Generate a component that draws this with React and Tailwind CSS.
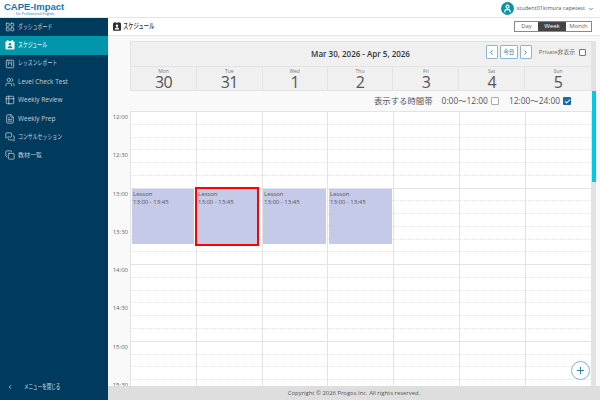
import React from 'react';
import { ChevronDown, ChevronLeft, ChevronRight, Plus, Check, User, LayoutGrid, SquareKanban, Users, Table2, FileText, MessagesSquare, Copy } from 'lucide-react';

// calendar page with a person on it, lucide has no close match
const ScheduleIcon = () => (
    <svg width="10" height="10" viewBox="0 0 10 10" className="shrink-0">
        <rect x="0.5" y="1.2" width="9" height="8.3" rx="1" fill="#fff" />
        <rect x="2.2" y="0" width="1.2" height="2.4" fill="#fff" />
        <rect x="6.6" y="0" width="1.2" height="2.4" fill="#fff" />
        <circle cx="5" cy="4.3" r="1.3" fill="#0097ab" />
        <path d="M2.6 8.3c0-1.6 1-2.3 2.4-2.3s2.4 .7 2.4 2.3z" fill="#0097ab" />
    </svg>
);

const TitleIcon = () => (
    <svg width="8" height="9" viewBox="0 0 8 9" className="shrink-0">
        <rect x="0" y="0.8" width="8" height="8" rx="1" fill="#2f2f2f" />
        <rect x="1.6" y="0" width="1" height="2" fill="#2f2f2f" />
        <rect x="5.4" y="0" width="1" height="2" fill="#2f2f2f" />
        <circle cx="4" cy="3.8" r="1.2" fill="#fff" />
        <path d="M1.9 7.4c0-1.4 .9-2 2.1-2s2.1 .6 2.1 2z" fill="#fff" />
    </svg>
);

// the original font has condensed kana, so squeeze them
const Kana = ({ children, className = '' }) => (
    <span className={`inline-block origin-left scale-x-[0.7] whitespace-nowrap ${className}`}>{children}</span>
);

const menuItems = [
    { label: 'ダッシュボード', icon: LayoutGrid, kana: true },
    { label: 'スケジュール', icon: ScheduleIcon, kana: true, active: true },
    { label: 'レッスンレポート', icon: SquareKanban, kana: true },
    { label: 'Level Check Test', icon: Users },
    { label: 'Weekly Review', icon: Table2 },
    { label: 'Weekly Prep', icon: FileText },
    { label: 'コンサルセッション', icon: MessagesSquare, kana: true },
    { label: '教材一覧', icon: Copy },
];

const days = [
    { name: 'Mon', date: '30', width: 'w-[66px]', lesson: 'left-[1px] right-[2px]' },
    { name: 'Tue', date: '31', width: 'w-[66px]', lesson: 'left-0 right-[5px] outline-2 outline-[#f00]' },
    { name: 'Wed', date: '1', width: 'w-[65px]', lesson: 'left-0 right-[1px]' },
    { name: 'Thu', date: '2', width: 'w-[66px]', lesson: 'left-[1px] right-[1px]' },
    { name: 'Fri', date: '3', width: 'w-[66px]' },
    { name: 'Sat', date: '4', width: 'w-[66px]' },
    { name: 'Sun', date: '5', width: 'w-[66px]' },
];

const times = ['12:00', '12:30', '13:00', '13:30', '14:00', '14:30', '15:00', '15:30'];
const slots = Array.from({ length: 24 }, (_, i) => i);

const Sidebar = () => (
    <aside className="w-[108px] shrink-0 bg-[#003a5c] flex flex-col justify-between text-[#c4d3dc]">
        <nav>
            {menuItems.map((item) => (
                <div key={item.label} className={`h-[18.3px] pl-[5px] flex items-center gap-[3px] text-[6.5px] ${item.active ? 'bg-[#0097ab] text-white' : ''}`}>
                    <item.icon size={10} strokeWidth={1.8} className="shrink-0" />
                    {item.kana ? <Kana className="text-[7px]">{item.label}</Kana> : <span className={item.label === '教材一覧' ? 'text-[6px]' : ''}>{item.label}</span>}
                </div>
            ))}
        </nav>
        <div className="h-[26px] pl-[7px] flex items-center gap-[11px] text-[#d5e0e6]">
            <ChevronLeft size={6} strokeWidth={3} className="shrink-0" />
            <Kana className="text-[6.5px]">メニューを閉じる</Kana>
        </div>
    </aside>
);

const CalendarHeader = () => (
    <div className="h-[50px] ml-[22px] bg-[#f0f0f0] border border-[#e3e3e3] flex flex-col">
        <div className="h-[26px] relative flex items-center justify-center border-b border-[#e3e3e3]">
            <span className="text-[8px] font-semibold text-[#333] mr-[1px]">Mar 30, 2026 - Apr 5, 2026</span>
            <div className="absolute right-[5px] top-[3px] flex items-center gap-[2px] text-[#2a6f9e]">
                <button className="w-[12px] h-[14px] bg-white border border-[#8fb6d0] rounded-[1px] flex items-center justify-center"><ChevronLeft size={7} strokeWidth={3} /></button>
                <button className="w-[18px] h-[14px] bg-white border border-[#8fb6d0] rounded-[1px] text-[5.5px] flex items-center justify-center">今日</button>
                <button className="w-[12px] h-[14px] bg-white border border-[#8fb6d0] rounded-[1px] flex items-center justify-center"><ChevronRight size={7} strokeWidth={3} /></button>
                <span className="ml-[5px] text-[5.8px] text-[#666]">Private非表示</span>
                <span className="ml-[2px] w-[7px] h-[7px] bg-white border border-[#777] rounded-[1px]" />
            </div>
        </div>
        <div className="flex-1 flex">
            {days.map((d) => (
                <div key={d.name} className={`${d.width} border-r border-[#e3e3e3] flex flex-col items-center text-[#555] last:border-r-0`}>
                    <span className="text-[5px] leading-[7px] mt-[1px] text-[#777]">{d.name}</span>
                    <span className="text-[16px] leading-[15px] tracking-[-0.7px]">{d.date}</span>
                </div>
            ))}
        </div>
    </div>
);

const TimeGrid = () => (
    <div className="flex-1 min-h-0 flex overflow-hidden">
        <div className="w-[22px] shrink-0">
            {times.map((t) => (
                <div key={t} className="h-[38.3px] pr-[2px] text-right text-[6px] leading-[12px] text-[#666]">{t}</div>
            ))}
        </div>
        <div className="flex items-start bg-white border-t border-l border-[#e3e3e3]">
            {days.map((d) => (
                <div key={d.name} className={`${d.width} relative border-r border-[#e3e3e3]`}>
                    {slots.map((s) => (
                        <div key={s} className={`h-[12.77px] border-b ${s % 6 === 5 ? 'border-solid border-[#e3e3e3]' : 'border-dotted border-[#e4e4e4]'}`} />
                    ))}
                    {d.lesson && (
                        <div className={`absolute top-[77px] h-[55px] bg-[#c5cae9] px-[1px] pt-[1px] text-[6px] leading-[8px] text-[#555] ${d.lesson}`}>
                            <div>Lesson</div>
                            <div>13:00 - 13:45</div>
                        </div>
                    )}
                </div>
            ))}
        </div>
    </div>
);

const App = () => {
    return (
        <div className="w-[600px] h-[400px] flex flex-col overflow-hidden relative bg-[#f9f9f9] font-['Open_Sans','Noto_Sans_CJK_JP',sans-serif]">
            {/* Header */}
            <header className="h-[18px] shrink-0 bg-white border-b border-[#e5e5e5] flex items-center justify-between pl-[4px] pr-[6px]">
                <div className="flex flex-col items-start">
                    <span className="text-[9.5px] leading-[10px] font-bold text-[#1b72ad] font-['Liberation_Sans',sans-serif]">CAPE-Impact</span>
                    <span className="text-[3.5px] leading-[4px] text-[#1b72ad] ml-[12px]">for Professional English</span>
                </div>
                <div className="flex items-center text-[5.6px] text-[#555]">
                    <span className="w-[13px] h-[13px] rounded-full bg-[#0a93a8] flex items-center justify-center text-white">
                        <User size={9} strokeWidth={3} />
                    </span>
                    <span className="ml-[3px]">student01kimura capetest</span>
                    <ChevronDown size={6} strokeWidth={3} className="ml-[3px]" />
                </div>
            </header>

            <div className="flex-1 min-h-0 flex">
                <Sidebar />

                <main className="flex-1 min-w-0 flex flex-col">
                    {/* Title */}
                    <div className="h-[18px] shrink-0 bg-white border-b border-[#e5e5e5] flex items-center justify-between pl-[5px] pr-[8px]">
                        <div className="flex items-center gap-[2px] text-[#333]">
                            <TitleIcon />
                            <Kana className="text-[7.5px] font-medium">スケジュール</Kana>
                        </div>
                        <div className="flex h-[11px] border border-[#888] text-[6px] leading-[9px] text-[#666]">
                            <span className="w-[23px] text-center bg-white">Day</span>
                            <span className="w-[28px] text-center bg-[#444] text-white">Week</span>
                            <span className="w-[25px] text-center bg-white">Month</span>
                        </div>
                    </div>

                    {/* Calendar */}
                    <div className="flex-1 min-h-0 flex pt-[5px]">
                        <div className="w-[484px] flex flex-col min-h-0">
                            <CalendarHeader />
                            <div className="h-[20px] shrink-0 flex items-center justify-end pr-[21px] text-[8.4px] text-[#555]">
                                <span>表示する時間帯</span>
                                <span className="ml-[9px]">0:00～12:00</span>
                                <span className="ml-[3px] w-[8px] h-[8px] bg-white border border-[#aaa] rounded-[1px]" />
                                <span className="ml-[10px]">12:00～24:00</span>
                                <span className="ml-[3px] w-[8px] h-[8px] bg-[#1a6aa8] rounded-[1px] flex items-center justify-center text-white">
                                    <Check size={7} strokeWidth={3.5} />
                                </span>
                            </div>
                            <TimeGrid />
                        </div>
                        {/* Scrollbar */}
                        <div className="w-[4px] bg-[#e2e2e2]">
                            <div className="mt-[50px] h-[91px] bg-[#00c8e6]" />
                        </div>
                    </div>

                    <footer className="h-[14px] shrink-0 bg-[#dedede] text-[5.9px] leading-[14px] text-center text-[#555]">
                        Copyright © 2026 Progos Inc. All rights reserved.
                    </footer>
                </main>
            </div>

            <button className="absolute left-[571px] top-[361px] w-[19px] h-[19px] rounded-full bg-white border border-[#7fb5d5] flex items-center justify-center text-[#1f78ad]">
                <Plus size={11} strokeWidth={2} />
            </button>
        </div>
    );
};

export default App;
